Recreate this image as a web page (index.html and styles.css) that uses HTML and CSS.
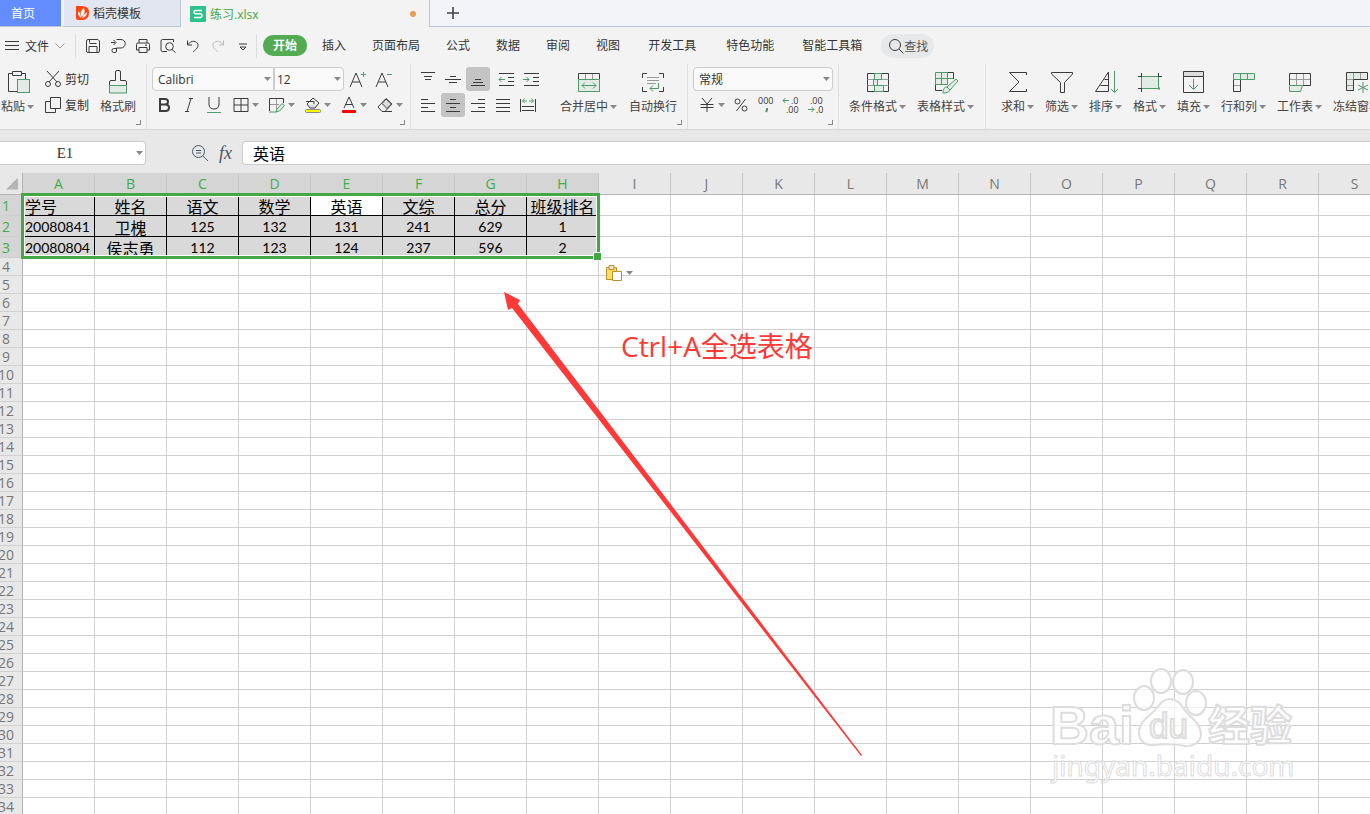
FILE: index.html
```
<!DOCTYPE html>
<html lang="zh-CN">
<head>
<meta charset="UTF-8">
<meta name="viewport" content="width=device-width, initial-scale=1.0">
<title>练习.xlsx</title>
<link rel="stylesheet" href="styles.css">
</head>
<body>

<!-- file tabs -->
<nav class="tabs">
    <a href="#" class="tab tab-home">首页</a>
    <a href="#" class="tab tab-docer">
        <svg width="14" height="16" viewBox="0 0 14 16"><path d="M0 2Q0 0 3 1Q14 0 13 8Q13 15 6 15H2Q0 15 0 13Z" fill="#ff4311"/><path d="M8 3Q3 6 5.500 12Q10 9 8 3ZM2.500 6Q1 10 5 13Q5 9 2.500 6ZM11 7Q11 12 6 13Q8 9 11 7Z" fill="#fff"/></svg>
        稻壳模板
    </a>
    <a href="#" class="tab tab-file">
        <svg width="16" height="16" viewBox="0 0 16 16"><rect width="16" height="16" rx="1" fill="#2dc28a"/><path d="M12 4.500H5.500Q4 4.500 4 6T5.500 7.800H10.500Q12 8 12 9.500T10.500 11.500H4" fill="none" stroke="#fff" stroke-width="1.500"/></svg>
        练习.xlsx
        <span class="dot"></span>
    </a>
    <button class="tab-add" aria-label="新建"><svg width="12" height="12" viewBox="0 0 12 12"><path d="M6 0V12M0 6H12" stroke="#444" stroke-width="1.600"/></svg></button>
</nav>

<!-- menu row -->
<div class="menu">
    <button class="file-btn">
        <svg class="ico" width="14" height="12" viewBox="0 0 14 12"><path d="M0 1.500H14M0 5.500H14M0 9.500H14"/></svg>
        文件
        <svg class="ico light" width="10" height="6" viewBox="0 0 10 6"><path d="M.5 .5L5 5L9.500 .5"/></svg>
    </button>
    <div class="quick">
        <button aria-label="保存"><svg class="ico" width="16" height="16" viewBox="0 0 16 16"><path d="M3 1.500H13L14.500 3V13Q14.500 14.500 13 14.500H3Q1.500 14.500 1.500 13V3Q1.500 1.500 3 1.500ZM4 14V8.500H12V14M4.500 5.500H11.500M4.500 2V4.500"/></svg></button>
        <button aria-label="输出"><svg class="ico" width="16" height="16" viewBox="0 0 16 16"><path d="M1 4.500H5M3.500 2L6 4.500L3.500 7M6.500 1.500H11A4 4 0 0 1 11 10H6.500V13Q6.500 14.500 5 14.500H3.500Q2 14.500 2 12.500T3.500 10.500H6.500"/></svg></button>
        <button aria-label="打印"><svg class="ico" width="16" height="16" viewBox="0 0 16 16"><path d="M4 5V1.500H12V5M4 12H1.500V6.500Q1.500 5 3 5H13Q14.500 5 14.500 6.500V12H12M4 9.500H12V14.500H4ZM10 7.200H12"/></svg></button>
        <button aria-label="打印预览"><svg class="ico" width="16" height="16" viewBox="0 0 16 16"><path d="M7 13.500H2.500Q1 13.500 1 12V3Q1 1.500 2.500 1.500H13.500V4M12 11.500L15.500 14.500"/><circle cx="9.500" cy="8.500" r="3.800"/></svg></button>
        <button aria-label="撤销"><svg class="ico" width="16" height="16" viewBox="0 0 16 16"><path d="M2.500 2.500V7H7M3 6.500C6 2 12 2.500 13 6.500C13.500 10 10 12 8 14"/></svg></button>
        <button aria-label="恢复"><svg class="ico faded" width="16" height="16" viewBox="0 0 16 16"><path d="M13.500 2.500V7H9M13 6.500C10 2 4 2.500 3 6.500C2.500 10 6 12 8 14"/></svg></button>
        <button aria-label="更多"><svg class="ico" width="16" height="16" viewBox="0 0 16 16"><path d="M4 6H12M5 9L8 12L11 9Z"/></svg></button>
    </div>
    <div class="ribbon-tabs">
        <button class="rtab active">开始</button>
        <button class="rtab">插入</button>
        <button class="rtab">页面布局</button>
        <button class="rtab">公式</button>
        <button class="rtab">数据</button>
        <button class="rtab">审阅</button>
        <button class="rtab">视图</button>
        <button class="rtab wide">开发工具</button>
        <button class="rtab wide">特色功能</button>
        <button class="rtab">智能工具箱</button>
    </div>
    <button class="find">
        <svg class="ico" width="16" height="16" viewBox="0 0 16 16"><circle cx="7" cy="7" r="5.500"/><path d="M11 11L15.500 15.500"/></svg>查找
    </button>
</div>

<!-- ribbon -->
<div class="ribbon">
    <section class="group clipboard">
        <button class="big">
            <svg class="ico" width="24" height="24" viewBox="0 0 24 24"><path d="M7 3.500H2.500V21.500H11M15 3.500H19.500V9M6.500 1.500H15.500V5.500H6.500Z"/><rect class="gf" x="11.500" y="9.500" width="12" height="13"/></svg>
            <span class="label">粘贴<i class="caret"></i></span>
        </button>
        <div class="stack">
            <button class="small"><svg class="ico" width="16" height="16" viewBox="0 0 16 16"><path d="M2 0L12 11M14 0L4 11"/><circle cx="3" cy="13" r="2.500"/><circle cx="13" cy="13" r="2.500"/></svg>剪切</button>
            <button class="small"><svg class="ico" width="16" height="16" viewBox="0 0 16 16"><path d="M5.500 .5H15.500V11.500H5.500ZM5.500 4.500H.5V15.500H10.500V11.500"/></svg>复制</button>
        </div>
        <button class="big">
            <svg class="ico" width="24" height="24" viewBox="0 0 24 24"><path d="M3.500 15V12Q3.500 10.500 5 10.500H9.500V2Q9.500 .5 11 .5H13Q14.500 .5 14.500 2V10.500H19Q20.500 10.500 20.500 12V15"/><path class="gf" d="M3.500 15.500H20.500V23H3.500Z"/></svg>
            <span class="label">格式刷</span>
        </button>
        <i class="corner"></i>
    </section>

    <section class="group font">
        <div class="row">
            <label class="combo font-name"><select aria-label="字体"><option>Calibri</option></select><i class="caret"></i></label>
            <label class="combo font-size"><select aria-label="字号"><option>12</option></select><i class="caret"></i></label>
            <button class="tool aa" aria-label="增大字号"><svg class="ico" width="18" height="18" viewBox="0 0 18 18"><path d="M1 17L7 3L13 17M3 12H11"/><path class="g" d="M12 4.500H17M14.500 2V7"/></svg></button>
            <button class="tool aa" aria-label="减小字号"><svg class="ico" width="18" height="18" viewBox="0 0 18 18"><path d="M1 17L7 3L13 17M3 12H11"/><path class="g" d="M12 4.500H17"/></svg></button>
        </div>
        <div class="row">
            <button class="tool" aria-label="加粗"><svg class="ico bold" width="16" height="16" viewBox="0 0 16 16"><path d="M4 2H9Q12 2 12 4.700T9 7.500H4ZM4 7.500H9.500Q13 7.500 13 10.700T9.500 14H4Z"/></svg></button>
            <button class="tool" aria-label="倾斜"><svg class="ico" width="16" height="16" viewBox="0 0 16 16"><path d="M8 1.500H12M4 14.500H8M10 1.500L6 14.500"/></svg></button>
            <button class="tool" aria-label="下划线"><svg class="ico" width="16" height="16" viewBox="0 0 16 16"><path d="M3 0V7Q3 12 8 12T13 7V0"/><path class="g" d="M1 15.500H15"/></svg></button>
            <button class="drop" aria-label="边框"><svg class="ico" width="16" height="16" viewBox="0 0 16 16"><path d="M1 1.500H15V14.500H1ZM8 1.500V14.500M1 8H15"/></svg><i class="caret"></i></button>
            <button class="drop" aria-label="绘制边框"><svg class="ico" width="16" height="16" viewBox="0 0 16 16"><path d="M.5 14V1.500H14.500V6"/><path class="light" d="M7.500 2V13M1 7.500H10"/><path class="gf" d="M0 15H7L8 12L13 6.500L15.500 8.500L10.500 14L7 15"/></svg><i class="caret"></i></button>
            <button class="drop" aria-label="填充颜色"><svg class="ico" width="16" height="16" viewBox="0 0 16 16"><path d="M3 7.500H13L10 10.500H5Z" fill="#ddd" stroke="none"/><path d="M2 7L8 1L14 6L10 11H5ZM1 4.500H9V7"/><rect x=".5" y="12.500" width="15" height="3" rx="1" fill="#ff0" stroke="#888"/></svg><i class="caret"></i></button>
            <button class="drop" aria-label="字体颜色"><svg class="ico" width="16" height="16" viewBox="0 0 16 16"><path d="M3 11L8 0L13 11M4.500 7.500H11.500"/><rect x="1" y="13" width="14" height="3" rx="1" fill="#f00" stroke="none"/></svg><i class="caret"></i></button>
            <button class="drop" aria-label="清除"><svg class="ico" width="16" height="16" viewBox="0 0 16 16"><path d="M9 1.500L15 7L8 14.500H5L1 10Z"/><path d="M9 2L14.500 7L10 11.500L5 6.500Z" fill="#ddd"/><path d="M7 14.500H15"/></svg><i class="caret"></i></button>
        </div>
        <i class="corner"></i>
    </section>

    <section class="group align">
        <div class="stack">
            <div class="row">
                <button class="tool" aria-label="顶端对齐"><svg class="ico" width="16" height="16" viewBox="0 0 16 16"><path d="M1 1.500H15M4 5.500H12M5 8.500H11"/></svg></button>
                <button class="tool" aria-label="垂直居中"><svg class="ico" width="16" height="16" viewBox="0 0 16 16"><path d="M5 5.500H11M0 8.500H16M4 11.500H12"/></svg></button>
                <button class="tool on" aria-label="底端对齐"><svg class="ico" width="16" height="16" viewBox="0 0 16 16"><path d="M5 8.500H11M3 11.500H13M1 14.500H15"/></svg></button>
                <button class="tool indent" aria-label="减少缩进"><svg class="ico" width="16" height="16" viewBox="0 0 16 16"><path d="M1 2.500H16M10 6.500H16M10 10.500H16M1 14.500H16"/><path class="g" d="M7 8.500H1M3.500 6L1 8.500L3.500 11"/></svg></button>
                <button class="tool" aria-label="增加缩进"><svg class="ico" width="16" height="16" viewBox="0 0 16 16"><path d="M1 2.500H16M10 6.500H16M10 10.500H16M1 14.500H16"/><path class="g" d="M0 8.500H6M3.500 6L6 8.500L3.500 11"/></svg></button>
            </div>
            <div class="row">
                <button class="tool" aria-label="左对齐"><svg class="ico" width="16" height="16" viewBox="0 0 16 16"><path d="M1 2.500H8M1 6.500H15M1 10.500H8M1 14.500H15"/></svg></button>
                <button class="tool on" aria-label="水平居中"><svg class="ico" width="16" height="16" viewBox="0 0 16 16"><path d="M5 2.500H11M1 6.500H15M5 10.500H11M1 14.500H15"/></svg></button>
                <button class="tool" aria-label="右对齐"><svg class="ico" width="16" height="16" viewBox="0 0 16 16"><path d="M8 2.500H15M1 6.500H15M8 10.500H15M1 14.500H15"/></svg></button>
                <button class="tool" aria-label="两端对齐"><svg class="ico" width="16" height="16" viewBox="0 0 16 16"><path d="M1 2.500H15M1 6.500H15M1 10.500H15M1 14.500H15"/></svg></button>
                <button class="tool" aria-label="分散对齐"><svg class="ico" width="16" height="16" viewBox="0 0 16 16"><path d="M.5 2V15M15.500 2V15M2 9.500H14M2 13.500H14"/><path class="g" d="M2.500 4H7M9 4H13.500M4.500 1.500L2.500 4L4.500 6M11.500 1.500L13.500 4L11.500 6"/></svg></button>
            </div>
        </div>
        <button class="big">
            <svg class="ico" width="24" height="24" viewBox="0 0 24 24"><path d="M1.500 9V3.500H22.500V9"/><path class="light" d="M8.500 4V9M15.500 4V9"/><path class="gf" d="M1.500 9.500H22.500V21.500H1.500Z"/><path class="g" d="M5 15.500H19M8 12.500L5 15.500L8 18.500M16 12.500L19 15.500L16 18.500"/></svg>
            <span class="label">合并居中<i class="caret"></i></span>
        </button>
        <button class="big">
            <svg class="ico" width="24" height="24" viewBox="0 0 24 24"><path d="M1.500 8V3.500H6M18 3.500H22.500V8M1.500 17V21.500H6M22.500 17V21.500H18"/><path class="light" d="M6 7.500H18M6 10.500H18M6 13.500H15"/><path class="g" d="M17.500 13V18.500H9M12 15.500L9 18.500L12 21.500"/></svg>
            <span class="label">自动换行</span>
        </button>
        <i class="corner"></i>
    </section>

    <section class="group number">
        <label class="combo num-format"><select aria-label="数字格式"><option>常规</option></select><i class="caret"></i></label>
        <div class="row">
            <button class="drop" aria-label="货币"><svg class="ico" width="16" height="16" viewBox="0 0 16 16"><path d="M3 1L8 7L13 1M1.500 7.500H14.500M1.500 10.500H14.500M8 7V15"/></svg><i class="caret"></i></button>
            <button class="tool" aria-label="百分比"><svg class="ico" width="16" height="16" viewBox="0 0 16 16"><circle cx="4.500" cy="4.500" r="2.500"/><circle cx="11.500" cy="11.500" r="2.500"/><path d="M12.500 2L3.500 14"/></svg></button>
            <button class="tool" aria-label="千位分隔"><svg class="ico" width="20" height="20" viewBox="0 0 20 20"><text x="2" y="9">000</text><path class="g" d="M11 13V15L10 17" stroke-width="2"/></svg></button>
            <button class="tool" aria-label="增加小数位"><svg class="ico" width="20" height="20" viewBox="0 0 20 20"><text x="10" y="9">.0</text><text x="5" y="18">.00</text><path class="g" d="M8 5.500H2M4.500 3L2 5.500L4.500 8"/></svg></button>
            <button class="tool" aria-label="减少小数位"><svg class="ico" width="20" height="20" viewBox="0 0 20 20"><text x="4" y="9">.00</text><text x="10" y="18">.0</text><path class="g" d="M2 14.500H8M5.500 12L8 14.500L5.500 17"/></svg></button>
        </div>
        <i class="corner"></i>
    </section>

    <section class="group styles">
        <button class="big">
            <svg class="ico" width="24" height="24" viewBox="0 0 24 24"><path d="M1.500 3.500H22.500V21.500H1.500Z"/><path class="light" d="M1.500 9.500H22.500M1.500 15.500H22.500M15.500 3.500V9M10.500 9.500V15"/><path class="gf" d="M8.500 3.500H15.500V9.500H8.500ZM7.500 9.500H11.500V15.500H7.500ZM8.500 15.500H17.500V21.500H8.500Z"/></svg>
            <span class="label">条件格式<i class="caret"></i></span>
        </button>
        <button class="big">
            <svg class="ico" width="24" height="24" viewBox="0 0 24 24"><path d="M13 2.500H19.500V9M1.500 14V20.500H8"/><path class="gf" d="M1.500 2.500H13.500V14.500H1.500ZM7.500 2.500V14.500M1.500 8.500H19"/><path class="gf" d="M9 23Q9 17 13 17L22 9L24 11L16 20Q15 23 9 23ZM13 17L16 20"/></svg>
            <span class="label">表格样式<i class="caret"></i></span>
        </button>
    </section>

    <section class="group editing">
        <button class="big">
            <svg class="ico" width="24" height="24" viewBox="0 0 24 24"><path d="M20.500 5V2.500H3.500L13 12L3.500 21.500H20.500V19"/></svg>
            <span class="label">求和<i class="caret"></i></span>
        </button>
        <button class="big">
            <svg class="ico" width="24" height="24" viewBox="0 0 24 24"><path d="M1.500 2.500H22.500V4L14.500 12.500V22.500H10.500V12.500L1.500 4Z"/></svg>
            <span class="label">筛选<i class="caret"></i></span>
        </button>
        <button class="big">
            <svg class="ico" width="24" height="24" viewBox="0 0 24 24"><path d="M1.500 21.500L14.500 2V21.500ZM10.500 9.500H14M6.500 15.500H14"/><path class="g" d="M20.500 1V22M17 19L20.500 22.500L24 19"/></svg>
            <span class="label">排序<i class="caret"></i></span>
        </button>
        <button class="big">
            <svg class="ico" width="24" height="24" viewBox="0 0 24 24"><path class="gf" d="M3.500 6.500H20.500V18.500H3.500Z"/><path d="M3.500 3V7M20.500 3V7M0 6.500H4M20 6.500H24M0 18.500H4M3.500 18V22"/><path class="g" d="M20 18.500H22" stroke-width="2"/></svg>
            <span class="label">格式<i class="caret"></i></span>
        </button>
        <button class="big">
            <svg class="ico" width="24" height="24" viewBox="0 0 24 24"><path d="M1.500 1.500H21.500V6.500H1.500Z" fill="#ddd"/><path d="M1.500 6.500V22.500H21.500V6.500"/><path class="g" d="M11.500 9V19M7 15L11.500 19.500L16 15"/></svg>
            <span class="label">填充<i class="caret"></i></span>
        </button>
        <button class="big">
            <svg class="ico" width="24" height="24" viewBox="0 0 24 24"><path d="M1.500 9V21.500H8.500V9"/><path class="light" d="M2 15.500H8"/><path class="gf" d="M1.500 3.500H22.500V9.500H1.500ZM8.500 3.500V9.500M15.500 3.500V9.500"/></svg>
            <span class="label">行和列<i class="caret"></i></span>
        </button>
        <button class="big">
            <svg class="ico" width="24" height="24" viewBox="0 0 24 24"><path d="M1.500 15V3.500H22.500V15.500H15"/><path class="light" d="M2 9.500H22M8.500 4V15M15.500 4V15"/><path class="gf" d="M1.500 15.500H14.500L12.500 21.500H1.500Z"/></svg>
            <span class="label">工作表<i class="caret"></i></span>
        </button>
        <button class="big">
            <svg class="ico" width="34" height="24" viewBox="0 0 34 24"><path d="M1.500 2.500H22.500V9.500H8.500V20.500H1.500Z" fill="#e2ebe5"/><path class="light" d="M8.500 3V9M15.500 3V9M2 9.500H8M2 15.500H8"/><path class="g" d="M18 12V23M13 15L23 20M13 20L23 15"/></svg>
            <span class="label">冻结窗格<i class="caret"></i></span>
        </button>
    </section>
</div>

<!-- formula bar -->
<div class="formula">
    <label class="name-box"><input type="text" value="E1" aria-label="名称框"><i class="caret"></i></label>
    <button aria-label="浏览公式"><svg class="ico slate" width="18" height="18" viewBox="0 0 18 18"><circle cx="7.500" cy="7.500" r="6"/><path d="M12 12L17 17M5 6.500H10M5 9H10"/></svg></button>
    <button class="fx">fx</button>
    <input class="formula-input" type="text" value="英语" aria-label="编辑栏">
</div>

<!-- sheet -->
<main class="sheet">
    <table class="grid">
        <thead><tr id="letters"><th class="all"><i></i></th></tr></thead>
        <tbody id="rows"></tbody>
    </table>
    <div class="selection"></div>
    <button class="paste-opt" aria-label="粘贴选项">
        <svg width="16" height="16" viewBox="0 0 16 16"><path d="M.5 2.500H10.500V14.500H.5Z" fill="#ffdc66" stroke="#b8912e"/><path d="M3 .5H8V4.500H3Z" fill="#ece5cb" stroke="#b8912e"/><path d="M6.500 6.500H15.500V15.500H6.500Z" fill="#fff" stroke="#b8912e"/></svg>
        <i class="caret"></i>
    </button>
    <svg class="arrow" width="360" height="466" viewBox="0 0 360 466"><path d="M0 0L16 8L14 12L358 463L357 464L8 16L4 18Z" fill="#fe3937"/></svg>
    <p class="note">Ctrl+A全选表格</p>
    <svg class="watermark" width="250" height="120" viewBox="0 0 250 120">
        <g>
            <ellipse cx="94" cy="31" rx="10" ry="12"/>
            <ellipse cx="111" cy="14" rx="10" ry="12"/>
            <ellipse cx="133" cy="15" rx="10" ry="12"/>
            <ellipse cx="146" cy="36" rx="10" ry="12"/>
            <path d="M120 32C111 32 109 40 102 46C95 52 89 57 89 66C89 74 96 79 103 78C112 77 128 77 135 79C143 80 151 75 151 67C151 58 144 53 138 47C132 41 130 32 120 32Z"/>
        </g>
        <text class="wm-bai" x="0" y="77">Bai</text>
        <text class="wm-du" x="99" y="71">du</text>
        <text class="wm-cn" x="158" y="74">经验</text>
        <text class="wm-url" x="2" y="109">jingyan.baidu.com</text>
    </svg>
</main>

<script src="script.js"></script>
</body>
</html>
```
FILE: styles.css
```
* {
    box-sizing: border-box;
}
body {
    margin: 0;
    height: 100vh;
    overflow: hidden;
    display: flex;
    flex-direction: column;
    background: #fff;
    color: #333;
    font: 12px "Open Sans", "Noto Sans CJK SC", sans-serif;
}
button {
    padding: 0;
    border: 0;
    background: none;
    color: inherit;
    font: inherit;
    cursor: pointer;
}
a {
    color: inherit;
    text-decoration: none;
}
svg {
    flex: none;
}

/* icons */
.ico {
    fill: none;
    stroke: #3b3b3b;
    stroke-width: 1;
}
.ico.light, .ico .light {
    stroke: #999;
}
.ico.faded {
    stroke: #bbb;
}
.ico.slate {
    stroke: #4a5568;
}
.ico.bold {
    stroke-width: 2;
}
.ico .g {
    stroke: #4f9a6c;
}
.ico .gf {
    stroke: #4f9a6c;
    fill: #e2ebe5;
}
.ico text {
    fill: #333;
    stroke: none;
    font: 9px "Open Sans", sans-serif;
}
.caret {
    flex: none;
    width: 7px;
    height: 4px;
    background: #888;
    clip-path: polygon(0 0, 100% 0, 50% 100%);
}

/* tabs */
.tabs {
    flex: none;
    display: flex;
    height: 27px;
    background: #f3f4f9;
}
.tab {
    display: flex;
    align-items: center;
    border-bottom: 1px solid #bfc3d6;
}
.tab-home {
    width: 61px;
    padding-left: 11px;
    background: #638dff;
    color: #fff;
}
.tab-docer {
    width: 120px;
    padding-left: 12px;
    gap: 3px;
    border-left: 3px solid #f3f4f9;
    border-right: 1px solid #bfc3d6;
    background: #e2e6f0;
}
.tab-file {
    width: 249px;
    padding: 0 13px 0 9px;
    gap: 4px;
    border-right: 1px solid #bfc3d6;
    border-bottom: 0;
    background: #f3f3f3;
    color: #3fa63f;
}
.dot {
    width: 6px;
    height: 6px;
    margin-left: auto;
    border-radius: 50%;
    background: #e59d55;
}
.tab-add {
    flex: 1;
    display: flex;
    align-items: center;
    padding-left: 17px;
    border-bottom: 1px solid #bfc3d6;
}

/* menu row */
.menu {
    flex: none;
    display: flex;
    align-items: center;
    height: 37px;
    background: #f3f3f3;
    white-space: nowrap;
}
.file-btn {
    display: flex;
    align-items: center;
    gap: 6px;
    padding: 0 10px 0 5px;
}
.quick {
    display: flex;
    align-items: center;
    gap: 9px;
    height: 24px;
    padding: 0 5px 0 9px;
    border-left: 1px solid #ddd;
    border-right: 1px solid #ddd;
}
.quick button {
    display: flex;
}
.ribbon-tabs {
    display: flex;
    padding: 0 6px;
}
.rtab {
    padding: 1px 13px 0;
    line-height: 20px;
}
.rtab.wide {
    padding: 1px 15px 0;
}
.rtab.active {
    padding: 1px 10px 0;
    margin-right: 2px;
    border-radius: 10px;
    background: #53ab53;
    color: #fff;
    font-weight: bold;
}
.find {
    display: flex;
    align-items: center;
    height: 24px;
    padding: 0 6px 0 7px;
    border-radius: 12px;
    background: #e6e8ea;
    color: #555;
}

/* ribbon */
.ribbon {
    flex: none;
    display: flex;
    height: 66px;
    overflow: hidden;
    border-bottom: 1px solid #d5d5d5;
    background: #f3f3f3;
    white-space: nowrap;
}
.group {
    flex: none;
    position: relative;
    display: flex;
    padding-top: 3px;
    border-right: 1px solid #e0e0e0;
}
.corner {
    position: absolute;
    right: 5px;
    bottom: 4px;
    width: 5px;
    height: 5px;
    border-right: 1px solid #888;
    border-bottom: 1px solid #888;
}
.big {
    display: flex;
    flex-direction: column;
    align-items: center;
    align-self: flex-start;
    padding-top: 3px;
}
.label {
    display: flex;
    align-items: center;
    gap: 2px;
    line-height: 26px;
    color: #444;
}
.stack {
    display: flex;
    flex-direction: column;
    gap: 2px;
}
.small {
    display: flex;
    align-items: center;
    gap: 4px;
    height: 24px;
}
.row {
    display: flex;
    align-items: center;
    gap: 1px;
    height: 24px;
}
.tool {
    display: flex;
    align-items: center;
    justify-content: center;
    width: 24px;
    height: 24px;
    border-radius: 3px;
}
.tool.on {
    background: #c4c4c4;
}
.tool.aa {
    margin-left: 1px;
}
.drop {
    display: flex;
    align-items: center;
    gap: 3px;
    height: 24px;
    padding: 0 3px 0 6px;
}
.combo {
    position: relative;
    display: flex;
    align-items: center;
    height: 24px;
    border: 1px solid #ccc;
    border-radius: 4px;
    background: #fafafa;
}
.combo select {
    width: 100%;
    height: 22px;
    padding: 0 5px;
    appearance: none;
    border: 0;
    background: none;
    color: #333;
    font: inherit;
}
.combo .caret, .name-box .caret {
    position: absolute;
    right: 2px;
}
.clipboard {
    width: 147px;
    gap: 11px;
    padding-left: 1px;
}
.font {
    flex-direction: column;
    width: 264px;
    gap: 2px;
    padding-left: 5px;
}
.font-name {
    width: 122px;
    border-radius: 4px 0 0 4px;
}
.font-size {
    width: 70px;
    margin-left: -1px;
    border-left: 1px solid #ccc;
    border-radius: 0 4px 4px 0;
}
.font-size select {
    padding: 0 2px;
}
.align {
    width: 277px;
    padding-left: 5px;
    gap: 12px;
}
.align .stack {
    width: 132px;
}
.indent {
    margin-left: 3px;
}
.number {
    flex-direction: column;
    width: 151px;
    gap: 2px;
    padding: 3px 5px 0;
}
.styles {
    width: 147px;
    gap: 11px;
    padding-left: 10px;
}
.editing {
    gap: 11px;
    padding-left: 15px;
    border-right: 0;
}

/* formula bar */
.formula {
    flex: none;
    display: flex;
    align-items: center;
    height: 43px;
    padding-top: 3px;
    background: #e8e8e8;
}
.formula button {
    display: flex;
}
.name-box {
    position: relative;
    display: flex;
    align-items: center;
    width: 146px;
    height: 24px;
    margin-right: 45px;
    border: 1px solid #ccc;
    border-left: 0;
    border-radius: 0 4px 4px 0;
    background: #fff;
}
.name-box input {
    width: 130px;
    border: 0;
    background: none;
    color: #333;
    font: 15px "Liberation Serif", serif;
    text-align: center;
}
.formula .fx {
    margin: 0 10px;
    color: #4a5568;
    font: italic 18px "Liberation Serif", serif;
}
.formula-input {
    flex: 1;
    height: 24px;
    padding: 0 10px;
    border: 1px solid #ccc;
    border-right: 0;
    border-radius: 4px 0 0 4px;
    background: #fff;
    color: #000;
    font: 16px "Noto Sans CJK SC", sans-serif;
}

/* sheet */
.sheet {
    flex: 1;
    position: relative;
    min-height: 0;
    overflow: hidden;
}
.grid {
    width: max-content;
    margin-left: -10px;
    table-layout: fixed;
    border-spacing: 0;
}
.grid th, .grid td {
    width: 72px;
    height: 18px;
    padding: 0;
    border-right: 1px solid #d0d0d0;
    border-bottom: 1px solid #d0d0d0;
    line-height: 17px;
    text-align: center;
    white-space: nowrap;
}
.grid th {
    background: #e8e8e8;
    color: #777;
    font: 14px/17px "Open Sans", sans-serif;
}
.grid thead th {
    height: 22px;
    border-right-color: #c8c8c8;
    border-bottom-color: #b4b4b4;
    line-height: 21px;
}
.grid tbody th, .grid .all {
    width: 33px;
    border-right-color: #b4b4b4;
}
.grid .all i {
    display: block;
    width: 12px;
    height: 12px;
    margin-left: 16px;
    background: #b4b4b4;
    clip-path: polygon(100% 0, 100% 100%, 0 100%);
}
.grid th.picked {
    background: #d5d5d5;
    color: #3fae49;
}
.grid .data th, .grid .data td {
    height: 21px;
    padding-top: 2px;
    line-height: 18px;
}
.grid td.filled {
    border-color: #000;
    background: #d9d9d9;
    color: #000;
    font-family: Lato, "Noto Sans CJK SC", sans-serif;
    font-size: 14px;
}
.grid td.cn {
    font-family: "Noto Sans CJK SC", sans-serif;
    font-size: 16px;
}
.grid td.first {
    padding-left: 2px;
    text-align: left;
}
.grid td.current {
    background: #fff;
}
.selection {
    position: absolute;
    left: 21px;
    top: 20px;
    width: 579px;
    height: 66px;
    border: 3px solid #43a843;
    box-shadow: inset 0 0 0 1px #fff;
}
.selection::after {
    content: "";
    position: absolute;
    right: -5px;
    bottom: -5px;
    width: 7px;
    height: 7px;
    border: 1px solid #fff;
    background: #43a843;
}
.paste-opt {
    position: absolute;
    left: 606px;
    top: 92px;
    display: flex;
    align-items: center;
    gap: 4px;
}
.arrow {
    position: absolute;
    left: 504px;
    top: 119px;
}
.note {
    position: absolute;
    left: 621px;
    top: 154px;
    margin: 0;
    color: #fe3937;
    font-size: 28px;
    line-height: 38px;
    white-space: nowrap;
}

/* watermark */
.watermark {
    position: absolute;
    left: 1050px;
    top: 494px;
    fill: #fff;
    fill-opacity: .7;
    stroke: #ddd;
    stroke-width: 2;
}
.wm-bai {
    font: bold 54px "Liberation Sans", sans-serif;
}
.wm-du {
    font: 35px "Liberation Sans", sans-serif;
}
.wm-cn {
    font: bold 42px "Noto Sans CJK SC", sans-serif;
}
.wm-url {
    font: 28px "Noto Sans", sans-serif;
    stroke-width: 1;
}
```
FILE: script.js
```
var data = [
    ['学号', '姓名', '语文', '数学', '英语', '文综', '总分', '班级排名'],
    ['20080841', '卫槐', '125', '132', '131', '241', '629', '1'],
    ['20080804', '侯志勇', '112', '123', '124', '237', '596', '2']
];

var sheet = document.querySelector('.sheet');
var cols = Math.ceil((window.innerWidth - 23) / 72);
var count = Math.ceil((sheet.clientHeight - 85) / 18) + 3;

// column letters
var letters = document.getElementById('letters');
for (var c = 0; c < cols; c++) {
    var th = document.createElement('th');
    th.textContent = String.fromCharCode(65 + c);
    if (c < 8) th.className = 'picked';
    letters.appendChild(th);
}

// rows, empty after the data
var rows = document.getElementById('rows');
for (var r = 0; r < count; r++) {
    var tr = document.createElement('tr');
    var head = document.createElement('th');
    head.textContent = r + 1;
    if (r < 3) {
        tr.className = 'data';
        head.className = 'picked';
    }
    tr.appendChild(head);
    for (var i = 0; i < cols; i++) {
        var td = document.createElement('td');
        if (data[r] && data[r][i]) {
            td.textContent = data[r][i];
            td.classList.add('filled');
            if (isNaN(data[r][i])) td.classList.add('cn');
            if (i === 0) td.classList.add('first');
            if (r === 0 && i === 4) td.classList.add('current');
        }
        tr.appendChild(td);
    }
    rows.appendChild(tr);
}
```
